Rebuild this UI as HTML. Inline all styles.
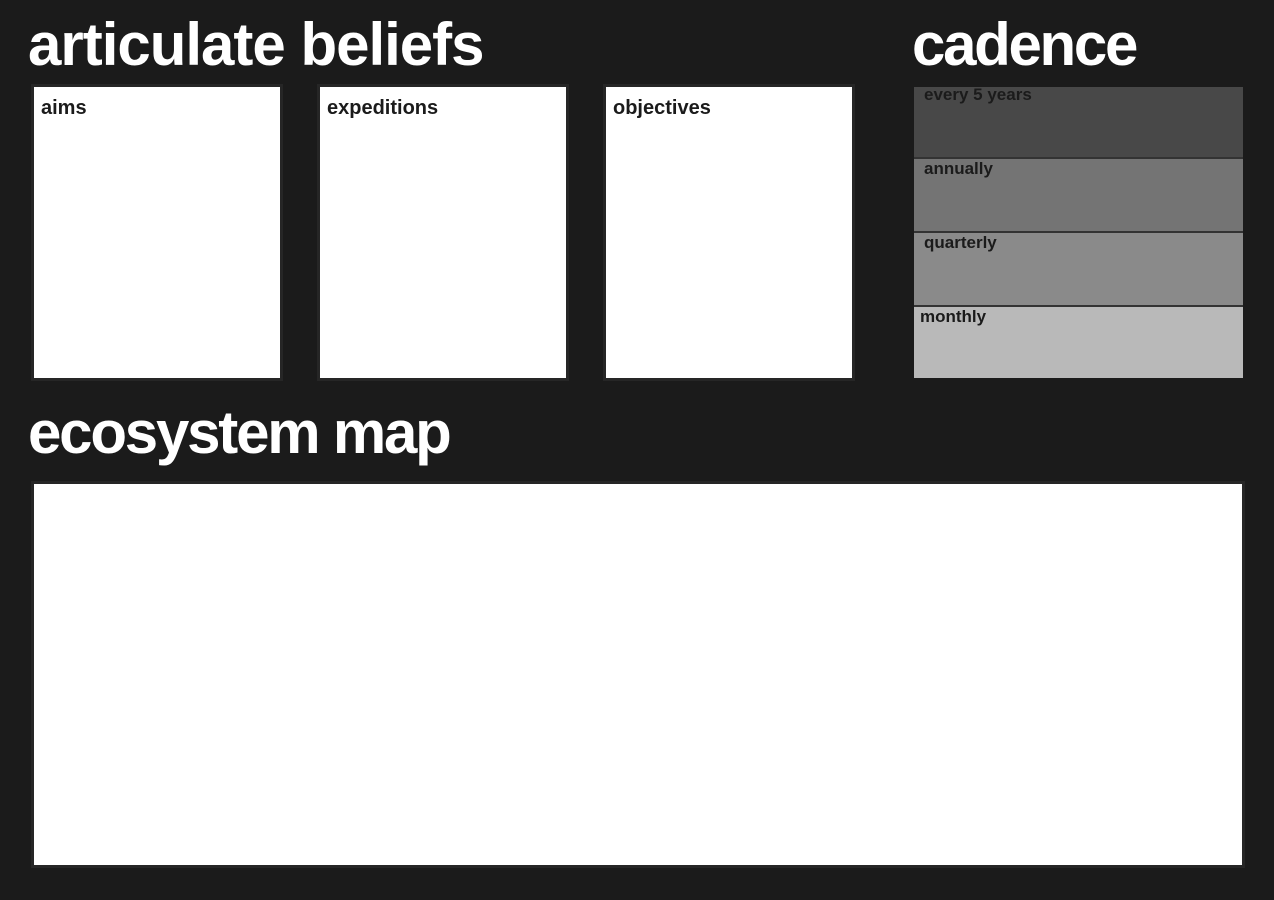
<!DOCTYPE html>
<html><head><style>
body{margin:0;width:1274px;height:900px;background:#1b1b1b;position:relative;overflow:hidden;font-family:"Liberation Sans",sans-serif;font-weight:bold}
h1{position:absolute;margin:0;color:#fff;font-size:60px;line-height:60px;letter-spacing:-1px}
.box{position:absolute;background:#fff;outline:3px solid #262626;}
.box span{position:absolute;left:7px;top:10px;font-size:20px;color:#1b1b1b}
.row{position:absolute;left:914px;width:329px}
.row span{position:absolute;left:10px;top:-2px;font-size:17px;color:#1b1b1b}
</style></head><body>
<h1 style="left:28px;top:15px">articulate beliefs</h1>
<h1 style="left:912px;top:15px;letter-spacing:-2.3px">cadence</h1>
<h1 style="left:28px;top:403px;letter-spacing:-2.2px">ecosystem map</h1>
<div class="box" style="left:34px;top:87px;width:246px;height:291px"><span>aims</span></div>
<div class="box" style="left:320px;top:87px;width:246px;height:291px"><span>expeditions</span></div>
<div class="box" style="left:606px;top:87px;width:246px;height:291px"><span>objectives</span></div>
<div class="row" style="top:87px;height:70px;background:#484848"><span>every 5 years</span></div>
<div class="row" style="top:157px;height:2px;background:#333"></div>
<div class="row" style="top:159px;height:72px;background:#747474"><span style="top:0">annually</span></div>
<div class="row" style="top:231px;height:2px;background:#333"></div>
<div class="row" style="top:233px;height:72px;background:#8a8a8a"><span style="top:0">quarterly</span></div>
<div class="row" style="top:305px;height:2px;background:#333"></div>
<div class="row" style="top:307px;height:71px;background:#b9b9b9"><span style="left:6px;top:0">monthly</span></div>
<div class="box" style="left:34px;top:484px;width:1208px;height:381px"></div>
</body></html>
